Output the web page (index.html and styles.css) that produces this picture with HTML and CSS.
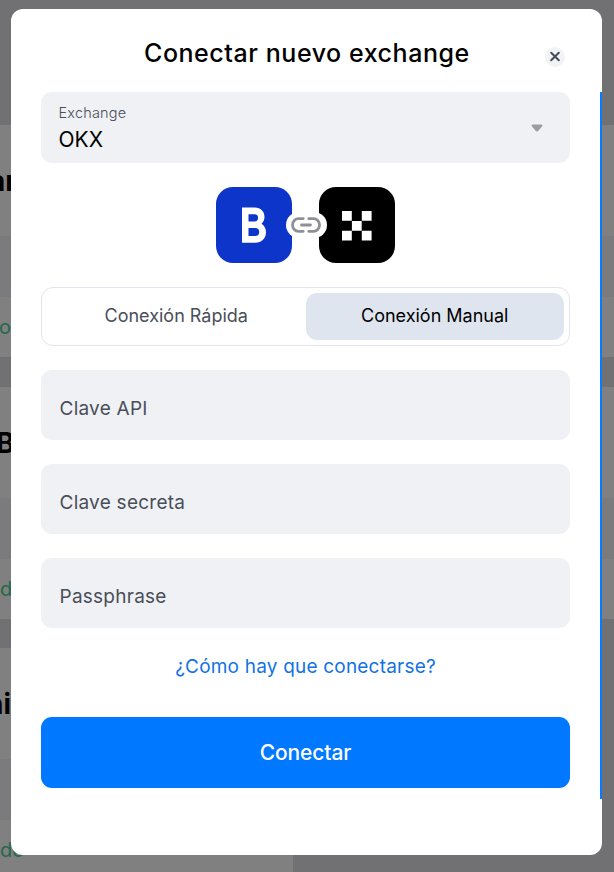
FILE: index.html
```
<!DOCTYPE html>
<html lang="es">
<head>
  <meta charset="UTF-8" />
  <meta name="viewport" content="width=device-width, initial-scale=1.0"/>
  <title>Conectar nuevo exchange</title>
  <link rel="stylesheet" href="styles.css">
</head>
<body>
  <div class="page">
    <div class="card">
      <div class="card-head"><span class="name name-1">ar</span></div>
      <div class="card-band"></div>
      <div class="card-foot"><span class="status status-1">o</span></div>
    </div>
    <div class="card">
      <div class="card-head"><span class="name name-2">B</span></div>
      <div class="card-band"></div>
      <div class="card-foot"><span class="status">d</span></div>
    </div>
    <div class="card card-half">
      <div class="card-head"><span class="name name-3">ni</span></div>
      <div class="card-band"></div>
      <div class="card-foot"><span class="status">do</span></div>
    </div>
  </div>

  <div class="modal">
    <div class="modal-header">
      <h1>Conectar nuevo exchange</h1>
      <button class="close" aria-label="Cerrar">
        <svg width="20" height="20" viewBox="0 0 20 20">
          <path d="M6.2 5.7l7.6 7.6M13.8 5.7l-7.6 7.6" fill="none" stroke="#474b58" stroke-width="2" stroke-linecap="round"/>
        </svg>
      </button>
    </div>

    <div class="modal-body">
      <div class="select">
        <div>
          <div class="select-label">Exchange</div>
          <div class="select-value">OKX</div>
        </div>
        <svg width="12" height="8" viewBox="0 0 12 8">
          <path d="M1.8 .5h8.4c1.2 0 1.6 1 .8 1.9L7.4 6.7c-.8 .9-2 .9-2.8 0L1 2.4C.2 1.5.6.5 1.8.5z" fill="#9c9da3"/>
        </svg>
      </div>

      <div class="logos">
        <svg class="logo" width="76" height="76" viewBox="0 0 76 76">
          <rect width="76" height="76" rx="17" fill="#0e35c9"/>
          <path d="M26 20.5H39c5.500 0 9.500 4 9.500 9.300c0 2.900-1.100 5.200-3 6.900c2.800 1.700 4.500 4.700 4.500 8.500c0 6-4.500 10.500-10.500 10.500H26zM32.500 27.200v7.200h6a3.600 3.600 0 0 0 0-7.200zM32.500 41v8h6.700a4 4 0 0 0 0-8z" fill="#fff" fill-rule="evenodd"/>
        </svg>
        <div class="link-badge">
          <svg width="30" height="16" viewBox="0 0 30 16">
            <path d="M12.2 1.7H7.500a6 6.300 0 0 0 0 12.600h4.700M17.800 1.700h4.700a6 6.300 0 0 1 0 12.600h-4.700M10.500 8h9" fill="none" stroke="#8f9097" stroke-width="2.800" stroke-linecap="round"/>
          </svg>
        </div>
        <svg class="logo" width="76" height="76" viewBox="0 0 76 76">
          <rect width="76" height="76" rx="17" fill="#000"/>
          <path d="M23 24h9.800v9.800H23zM42.800 24h9.800v9.800h-9.800zM32.900 33.900h9.800v9.800h-9.800zM23 43.800h9.800v9.800H23zM42.800 43.800h9.800v9.800h-9.800z" fill="#fff"/>
        </svg>
      </div>

      <div class="tabs">
        <button class="tab">Conexión Rápida</button>
        <button class="tab active">Conexión Manual</button>
      </div>

      <div class="field">Clave API</div>
      <div class="field">Clave secreta</div>
      <div class="field">Passphrase</div>

      <a class="help">¿Cómo hay que conectarse?</a>

      <button class="submit">Conectar</button>
    </div>
  </div>
</body>
</html>
```
FILE: styles.css
```
* {
  box-sizing: border-box;
}

body {
  margin: 0;
  height: 872px;
  overflow: hidden;
  background-color: #717173;
  font-family: Inter, "Liberation Sans", sans-serif;
  color: #000;
}

button {
  border: 0;
  padding: 0;
  background: none;
  font-family: inherit;
}

/* dimmed page behind the dialog */
.page {
  height: 872px;
  padding-top: 125px;
  display: flex;
  flex-direction: column;
  gap: 29.5px;
  overflow: hidden;
}

.card {
  flex: none;
  height: 232px;
  background-color: #808080;
}

.card-half {
  width: 292.5px;
}

.card-head {
  height: 111px;
  padding-top: 38px;
}

.card-band {
  height: 61px;
  background-color: #7b7b7d;
}

.card-foot {
  height: 60px;
  padding-top: 16px;
}

.name {
  display: block;
  font-size: 28px;
  line-height: 36px;
  font-weight: 700;
}

.name-1 {
  margin-left: -11px;
}

.name-2 {
  margin-left: -4px;
}

.name-3 {
  margin-left: -14px;
}

.status {
  display: block;
  font-size: 20px;
  line-height: 28px;
  color: #23684a;
}

.status-1 {
  margin-left: -1px;
}

.modal {
  position: absolute;
  left: 11px;
  top: 9px;
  width: 591px;
  height: 846px;
  border-radius: 12px;
  background-color: #fff;
}

.modal-header {
  height: 83px;
  padding: 0 37px 0 133px;
  display: flex;
  justify-content: space-between;
}

h1 {
  margin: 28px 0 0;
  font-size: 25px;
  line-height: 32px;
  font-weight: 500;
  letter-spacing: 0.55px;
  white-space: nowrap;
}

.close {
  width: 20px;
  height: 20px;
  margin-top: 38px;
  border-radius: 50%;
  background-color: #f2f3f6;
}

.close svg {
  display: block;
}

.modal-body {
  height: 707px;
  padding: 0 30px;
  border-right: 2px solid #0a7aff;
  display: flex;
  flex-direction: column;
}

.select {
  height: 71px;
  padding: 0 27px 0 17.5px;
  border-radius: 11px;
  background-color: #eff1f5;
  display: flex;
  align-items: center;
  justify-content: space-between;
}

.select-label {
  font-size: 14.5px;
  line-height: 20px;
  font-weight: 300;
  letter-spacing: 0.2px;
  color: #4a4e58;
}

.select-value {
  margin-top: 4px;
  font-size: 21px;
  line-height: 26px;
}

.logos {
  margin-top: 24px;
  display: flex;
  justify-content: center;
  align-items: center;
}

.link-badge {
  z-index: 1;
  width: 41px;
  height: 26px;
  margin: 0 -8px 0 -6.5px;
  border-radius: 13px;
  background-color: #fff;
  display: flex;
  align-items: center;
  justify-content: center;
}

.tabs {
  height: 59px;
  margin-top: 24px;
  padding: 5px;
  border: 1px solid #e0e4ec;
  border-radius: 12px;
  display: flex;
}

.tab {
  flex: 1;
  padding-bottom: 2px;
  border-radius: 11px;
  font-size: 18px;
  color: #4a4e58;
}

.tab.active {
  background-color: #dfe5ef;
  color: #000;
}

.field {
  height: 70px;
  margin-top: 24px;
  padding: 6px 18.5px 0;
  border-radius: 11px;
  background-color: #eff1f5;
  display: flex;
  align-items: center;
  font-size: 19px;
  letter-spacing: 0.25px;
  color: #4a4e58;
}

.help {
  margin-top: 26px;
  font-size: 19px;
  line-height: 26px;
  letter-spacing: 0.2px;
  text-align: center;
  color: #1272e4;
}

.submit {
  height: 71px;
  margin-top: 37px;
  border-radius: 11px;
  background-color: #0078ff;
  font-size: 21px;
  font-weight: 500;
  letter-spacing: -0.1px;
  color: #fff;
}
```
